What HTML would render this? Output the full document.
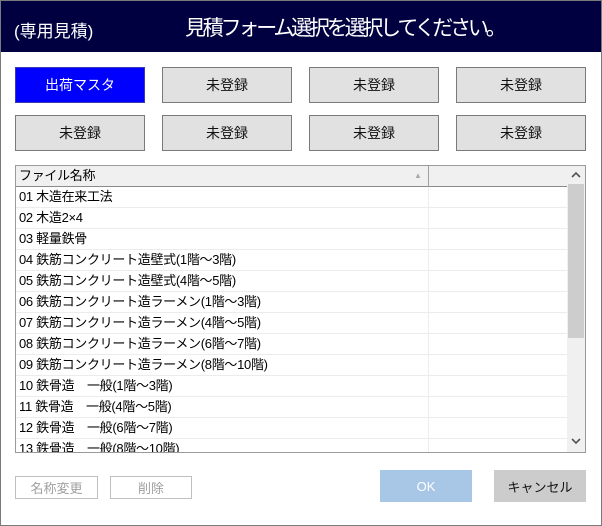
<!DOCTYPE html>
<html><head><meta charset="utf-8"><style>
*{box-sizing:border-box;margin:0;padding:0}
body{width:602px;height:526px;background:#fff;font-family:"Liberation Sans","Noto Sans CJK JP",sans-serif;position:relative;overflow:hidden}
.frame{position:absolute;left:0;top:0;width:602px;height:526px;border:1px solid #7a7a7a}
.hdr{position:absolute;left:1px;top:1px;width:600px;height:51px;background:#000040;color:#fff}
.abs{position:absolute}
.btn{position:absolute;width:130px;height:36px;background:#e1e1e1;border:1px solid #7a7a7a;font-size:14px;display:flex;align-items:center;justify-content:center;color:#111}
.list{position:absolute;left:15px;top:165px;width:571px;height:288px;border:1px solid #9a9a9a;overflow:hidden}
.lh{position:absolute;left:0;top:0;width:552px;height:21px;background:#f0f0f0;border-bottom:1px solid #8a8a8a;font-size:13px;line-height:20px;padding-left:3px;letter-spacing:-0.3px}
.row{position:absolute;left:0;width:552px;height:21px;border-bottom:1px solid #ececec;font-size:13px;line-height:20px;padding-left:3px;white-space:nowrap;letter-spacing:-0.3px}
.vcol{position:absolute;left:412px;top:0;width:1px;height:288px;background:#ececec}
.sb{position:absolute;left:551px;top:0;width:18px;height:286px;background:#f0f0f0}
.b2{position:absolute;font-size:13px;display:flex;align-items:center;justify-content:center}
</style></head><body>
<div class="frame"></div>
<div class="hdr">
<div class="abs" style="left:13px;top:16px;font-size:17px">(専用見積)</div>
<div class="abs" style="left:184px;top:11px;font-size:21px;letter-spacing:-3.2px;white-space:nowrap">見積フォーム選択を選択してください。</div>
</div>
<div class="btn" style="left:15px;top:67px;background:#0000ff;color:#fff;border-color:#3a3ab0">出荷マスタ</div>
<div class="btn" style="left:162px;top:67px">未登録</div>
<div class="btn" style="left:309px;top:67px">未登録</div>
<div class="btn" style="left:456px;top:67px">未登録</div>
<div class="btn" style="left:15px;top:115px">未登録</div>
<div class="btn" style="left:162px;top:115px">未登録</div>
<div class="btn" style="left:309px;top:115px">未登録</div>
<div class="btn" style="left:456px;top:115px">未登録</div>
<div class="list">
<div class="vcol"></div>
<div class="lh">ファイル名称<span class="abs" style="left:398px;top:0;font-size:8px;color:#aaa">▲</span></div>
<div class="abs" style="left:412px;top:0;width:1px;height:21px;background:#a0a0a0"></div>
<div class="row" style="top:21px">01 木造在来工法</div>
<div class="row" style="top:42px">02 木造2×4</div>
<div class="row" style="top:63px">03 軽量鉄骨</div>
<div class="row" style="top:84px">04 鉄筋コンクリート造壁式(1階～3階)</div>
<div class="row" style="top:105px">05 鉄筋コンクリート造壁式(4階～5階)</div>
<div class="row" style="top:126px">06 鉄筋コンクリート造ラーメン(1階～3階)</div>
<div class="row" style="top:147px">07 鉄筋コンクリート造ラーメン(4階～5階)</div>
<div class="row" style="top:168px">08 鉄筋コンクリート造ラーメン(6階～7階)</div>
<div class="row" style="top:189px">09 鉄筋コンクリート造ラーメン(8階～10階)</div>
<div class="row" style="top:210px">10 鉄骨造　一般(1階～3階)</div>
<div class="row" style="top:231px">11 鉄骨造　一般(4階～5階)</div>
<div class="row" style="top:252px">12 鉄骨造　一般(6階～7階)</div>
<div class="row" style="top:273px">13 鉄骨造　一般(8階～10階)</div>
<div class="sb">
<svg class="abs" style="left:4px;top:5px" width="10" height="7"><path d="M1 6 L5 2 L9 6" stroke="#555" stroke-width="1.6" fill="none"/></svg>
<div class="abs" style="left:1px;top:18px;width:16px;height:154px;background:#cdcdcd"></div>
<svg class="abs" style="left:4px;top:272px" width="10" height="7"><path d="M1 1 L5 5 L9 1" stroke="#555" stroke-width="1.6" fill="none"/></svg>
</div>
</div>
<div class="b2" style="left:15px;top:476px;width:83px;height:23px;border:1px solid #bfbfbf;color:#a0a0a0;background:#fff">名称変更</div>
<div class="b2" style="left:110px;top:476px;width:82px;height:23px;border:1px solid #bfbfbf;color:#a0a0a0;background:#fff">削除</div>
<div class="b2" style="left:380px;top:470px;width:92px;height:32px;background:#a8c6e6;color:#fff">OK</div>
<div class="b2" style="left:494px;top:470px;width:92px;height:32px;background:#cccccc;color:#111">キャンセル</div>
</body></html>
